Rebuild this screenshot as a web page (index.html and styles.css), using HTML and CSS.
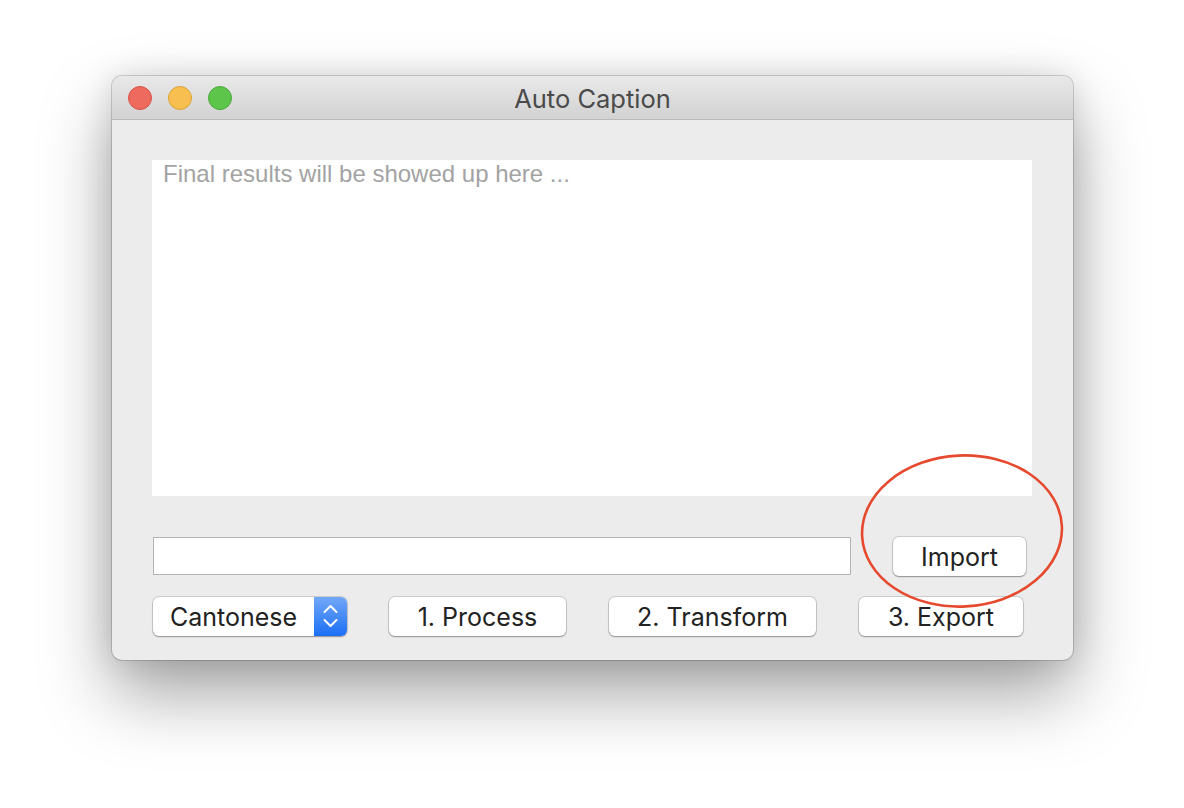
FILE: index.html
```html
<!DOCTYPE html>
<html>
<head>
<meta charset="utf-8">
<link rel="stylesheet" href="styles.css">
</head>
<body>
<div class="window">
  <div class="titlebar">
    <div class="lights">
      <span class="light red"></span>
      <span class="light yellow"></span>
      <span class="light green"></span>
    </div>
    <div class="title">Auto Caption</div>
  </div>
  <div class="content">
    <div class="results">Final results will be showed up here ...</div>
    <div class="import-row">
      <div class="path-field"></div>
      <div class="import-wrap">
        <button class="btn import">Import</button>
        <svg class="circle" width="210" height="160" viewBox="0 0 210 160">
          <ellipse cx="105" cy="80" rx="100" ry="75.5" fill="none" stroke="#e64a2e" stroke-width="2.6" transform="rotate(-3 105 80)"/>
        </svg>
      </div>
    </div>
    <div class="action-row">
      <div class="popup">
        <span class="popup-label">Cantonese</span>
        <span class="stepper">
          <svg width="33" height="39" viewBox="0 0 33 39">
            <polyline points="10.5,15 16.5,9 22.5,15" fill="none" stroke="#fff" stroke-width="2" stroke-linecap="round" stroke-linejoin="round"/>
            <polyline points="10.5,23 16.5,29 22.5,23" fill="none" stroke="#fff" stroke-width="2" stroke-linecap="round" stroke-linejoin="round"/>
          </svg>
        </span>
      </div>
      <button class="btn process">1. Process</button>
      <button class="btn transform">2. Transform</button>
      <button class="btn export">3. Export</button>
    </div>
  </div>
</div>
</body>
</html>
```

FILE: styles.css
```css
html, body {
  margin: 0;
  padding: 0;
  background: #ffffff;
  width: 1184px;
  height: 808px;
  overflow: hidden;
}

body {
  padding: 76px 0 0 112px;
  box-sizing: border-box;
  font-family: "Inter", "Liberation Sans", sans-serif;
}

.window {
  width: 961px;
  height: 584px;
  background: #ececec;
  border-radius: 10px;
  box-shadow: 0 0 0 1px rgba(0,0,0,0.16), 0 34px 70px rgba(0,0,0,0.36), 0 0 32px rgba(0,0,0,0.12);
  display: flex;
  flex-direction: column;
}

.titlebar {
  height: 43px;
  border-bottom: 1px solid #b9b9b9;
  background: linear-gradient(#e9e9e9, #d2d2d2);
  border-radius: 10px 10px 0 0;
  display: flex;
  align-items: center;
  position: relative;
  flex-shrink: 0;
}

.lights {
  display: flex;
  gap: 16px;
  padding-left: 16px;
  padding-top: 1px;
}

.light {
  width: 24px;
  height: 24px;
  border-radius: 50%;
  box-sizing: border-box;
}
.red { background: #ee6a5e; border: 1px solid #d5534a; }
.yellow { background: #f6bf4f; border: 1px solid #dca33b; }
.green { background: #5ec54b; border: 1px solid #4aa93b; }

.title {
  position: absolute;
  left: 0;
  right: 0;
  top: 0;
  bottom: 0;
  display: flex;
  align-items: center;
  justify-content: center;
  font-size: 25.5px;
  color: #4a4a4a;
  padding-top: 2px;
}

.content {
  padding: 40px 41px 0 40px;
  display: flex;
  flex-direction: column;
}

.results {
  height: 336px;
  background: #ffffff;
  font-family: "Liberation Sans", sans-serif;
  font-size: 24px;
  color: #a3a3a3;
  padding: 0 0 0 11px;
  box-sizing: border-box;
  line-height: 28px;
}

.import-row {
  display: flex;
  align-items: flex-start;
  margin-top: 41px;
  padding-left: 1px;
}

.path-field {
  width: 698px;
  height: 38px;
  box-sizing: border-box;
  background: #ffffff;
  border: 1px solid #b3b3b3;
}

.import-wrap {
  margin-left: 42px;
  position: relative;
}

.btn {
  font-family: "Inter", "Liberation Sans", sans-serif;
  font-size: 25px;
  color: #222222;
  background: #ffffff;
  border: none;
  border-radius: 6px;
  box-shadow: 0 0 0 1px rgba(0,0,0,0.13), 0 1px 1.5px rgba(0,0,0,0.3);
  height: 39px;
  padding: 0;
  margin: 0;
  display: flex;
  align-items: center;
  justify-content: center;
}

.import { width: 133px; }

.circle {
  position: absolute;
  left: -36px;
  top: -86px;
  pointer-events: none;
}

.action-row {
  display: flex;
  align-items: center;
  margin-top: 21px;
  padding-left: 1px;
}

.popup {
  width: 194px;
  height: 39px;
  display: flex;
  background: #ffffff;
  border-radius: 6px;
  box-shadow: 0 0 0 1px rgba(0,0,0,0.13), 0 1px 1.5px rgba(0,0,0,0.3);
  overflow: hidden;
}

.popup-label {
  flex: 1;
  font-size: 25px;
  color: #222222;
  display: flex;
  align-items: center;
  padding-left: 17px;
}

.stepper {
  width: 33px;
  height: 39px;
  background: linear-gradient(#72a8f8, #1b6ef5);
  display: block;
}
.stepper svg { display: block; }

.process { width: 177px; margin-left: 42px; }
.transform { width: 207px; margin-left: 43px; }
.export { width: 164px; margin-left: 43px; }
```
